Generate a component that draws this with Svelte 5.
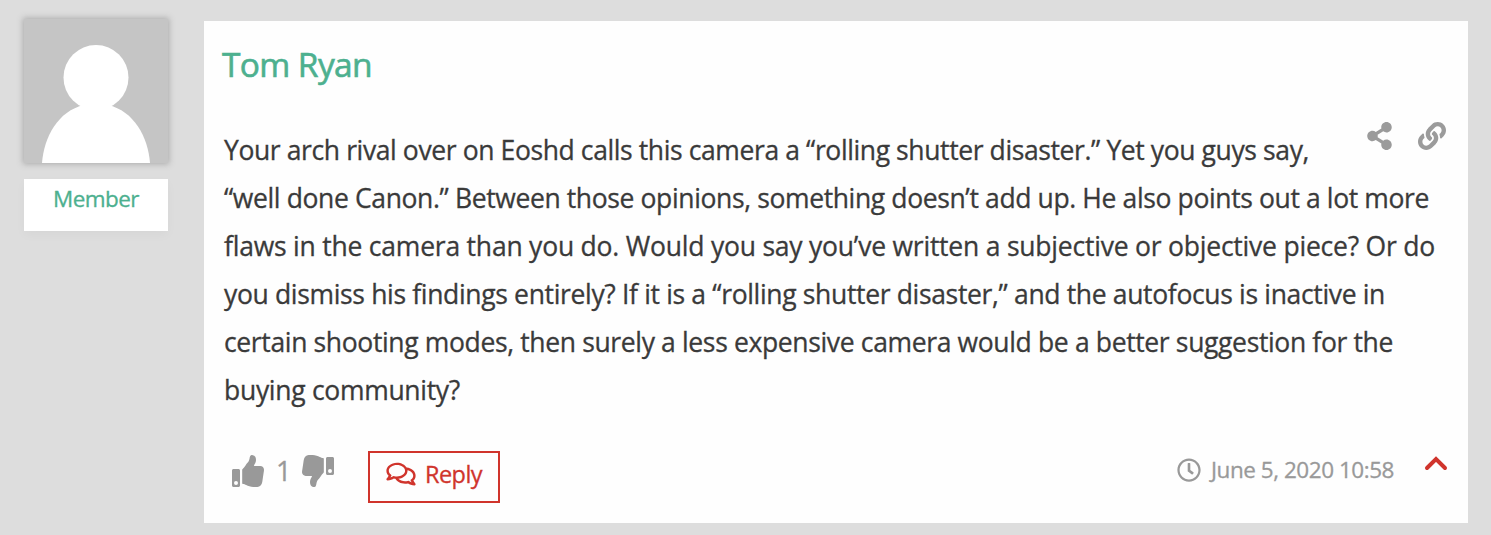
<script>
	const comment = {
		author: 'Tom Ryan',
		role: 'Member',
		votes: 1,
		date: 'June 5, 2020 10:58',
		lines: [
			{ text: 'Your arch rival over on Eoshd calls this camera a “rolling shutter disaster.” Yet you guys say,', width: 1085 },
			{ text: '“well done Canon.” Between those opinions, something doesn’t add up. He also points out a lot more', width: 1205 },
			{ text: 'flaws in the camera than you do. Would you say you’ve written a subjective or objective piece? Or do', width: 1211 },
			{ text: 'you dismiss his findings entirely? If it is a “rolling shutter disaster,” and the autofocus is inactive in', width: 1161 },
			{ text: 'certain shooting modes, then surely a less expensive camera would be a better suggestion for the', width: 1169 },
			{ text: 'buying community?', width: 236 }
		]
	};

	// stretch or squeeze the tracking so a line ends at its measure
	function fit(node, width) {
		const natural = node.getBoundingClientRect().width;
		node.style.letterSpacing = `${(width - natural) / node.textContent.length}px`;
	}
</script>

{#snippet thumb()}
	<path d="M384 81.5c0 42.4-26 66.2-33.3 94.5h101.8c33.4 0 59.4 27.7 59.5 58.1 0 18-3 31-6 49l-22 150c-8 48-38 78-80 79h-57c-48.3 0-87.8-17.6-119.6-31.7-16-7.1-36.8-15.9-52.6-16.2-6.5-.1-11.8-5.5-11.8-12V238.3c0-3.2 1.3-6.3 3.6-8.5 39.6-39.1 56.6-80.6 89.1-113.1 14.8-14.8 20.2-37.2 25.4-58.9C282.5 39.3 291.8 0 312 0c24 0 72 8 72 81.5z" />
{/snippet}

<div class="comment">
	<aside>
		<svg class="avatar" viewBox="0 0 144 144">
			<path fill="#c5c5c5" d="M0 0h144v144H0z" />
			<circle cx="72" cy="58.5" r="32.5" fill="#fff" />
			<path fill="#fff" d="M18 144C20 118 34 92 60 86h24c26 6 40 32 42 58z" />
		</svg>
		<div class="role"><span use:fit={86}>{comment.role}</span></div>
	</aside>

	<article>
		<h3><span use:fit={150}>{comment.author}</span></h3>

		<div class="body">
			<div class="tools">
				<svg width="25" height="28" viewBox="0 0 448 512">
					<path d="M352 320c-22.608 0-43.387 7.819-59.79 20.895l-102.486-64.054a96.551 96.551 0 0 0 0-41.683l102.486-64.054C308.613 184.181 329.392 192 352 192c53.019 0 96-42.981 96-96S405.019 0 352 0s-96 42.981-96 96c0 7.158.79 14.13 2.276 20.841L155.79 180.895C139.387 167.819 118.608 160 96 160c-53.019 0-96 42.981-96 96s42.981 96 96 96c22.608 0 43.387-7.819 59.79-20.895l102.486 64.054A96.301 96.301 0 0 0 256 416c0 53.019 42.981 96 96 96s96-42.981 96-96-42.981-96-96-96z" />
				</svg>
				<svg width="28" height="28" viewBox="0 0 512 512">
					<path d="M326.612 185.391c59.747 59.809 58.927 155.698.36 214.59-.11.12-.24.25-.36.37l-67.2 67.2c-59.27 59.27-155.699 59.262-214.96 0-59.27-59.26-59.27-155.7 0-214.96l37.106-37.106c9.84-9.84 26.786-3.3 27.294 10.606.648 17.722 3.826 35.527 9.69 52.721 1.986 5.822.567 12.262-3.783 16.612l-13.087 13.087c-28.026 28.026-28.905 73.66-1.155 101.96 28.024 28.579 74.086 28.749 102.325.51l67.2-67.19c28.191-28.191 28.073-73.757 0-101.83-3.701-3.694-7.429-6.564-10.341-8.569a16.037 16.037 0 0 1-6.947-12.606c-.396-10.567 3.348-21.456 11.698-29.806l21.054-21.055c5.521-5.521 14.182-6.199 20.584-1.731a152.482 152.482 0 0 1 20.522 17.197zM467.547 44.449c-59.261-59.262-155.69-59.27-214.96 0l-67.2 67.2c-.12.12-.25.25-.36.37-58.566 58.892-59.387 154.781.36 214.59a152.454 152.454 0 0 0 20.521 17.196c6.402 4.468 15.064 3.789 20.584-1.731l21.054-21.055c8.35-8.35 12.094-19.239 11.698-29.806a16.037 16.037 0 0 0-6.947-12.606c-2.912-2.005-6.64-4.875-10.341-8.569-28.073-28.073-28.191-73.639 0-101.83l67.2-67.19c28.239-28.239 74.3-28.069 102.325.51 27.75 28.3 26.872 73.934-1.155 101.96l-13.087 13.087c-4.35 4.35-5.769 10.79-3.783 16.612 5.864 17.194 9.042 34.999 9.69 52.721.509 13.906 17.454 20.446 27.294 10.606l37.106-37.106c59.271-59.259 59.271-155.699.001-214.959z" />
				</svg>
			</div>
			<p>
				{#each comment.lines as line}
					<span use:fit={line.width}>{line.text}</span><br />
				{/each}
			</p>
		</div>

		<footer>
			<div class="votes">
				<svg width="32" height="32" viewBox="0 0 512 512">
					<path fill-rule="evenodd" d="M104 224H24c-13.3 0-24 10.7-24 24v240c0 13.3 10.7 24 24 24h80c13.3 0 24-10.7 24-24V248c0-13.3-10.7-24-24-24zM64 480a32 32 0 1 1 0-64 32 32 0 0 1 0 64z" />
					{@render thumb()}
				</svg>
				<span class="count">{comment.votes}</span>
				<svg width="32" height="32" viewBox="0 0 512 512">
					<path fill-rule="evenodd" d="M408 32h80c13.3 0 24 10.7 24 24v240c0 13.3-10.7 24-24 24h-80c-13.3 0-24-10.7-24-24V56c0-13.3 10.7-24 24-24zm40 256a32 32 0 1 0 0-64 32 32 0 0 0 0 64z" />
					<g transform="rotate(180 256 256)">{@render thumb()}</g>
				</svg>
			</div>

			<button class="reply">
				<svg width="30" height="26" viewBox="0 0 576 512">
					<path d="M532 386.2c27.5-27.1 44-61.1 44-98.2 0-80-76.5-146.1-176.2-157.9C368.3 72.5 294.3 32 208 32 93.1 32 0 103.6 0 192c0 37 16.5 71 44 98.2-15.3 30.7-37.3 54.5-37.7 54.9-6.3 6.7-8.1 16.5-4.4 25 3.6 8.5 12 14 21.2 14 53.5 0 96.7-20.2 125.2-38.8 9.2 2.1 18.7 3.7 28.4 4.9C208.1 407.6 281.8 448 368 448c20.8 0 40.8-2.4 59.8-6.8C456.3 459.7 499.4 480 553 480c9.2 0 17.5-5.5 21.2-14 3.6-8.5 1.9-18.3-4.4-25-.4-.3-22.5-24.1-37.8-54.8zm-392.8-92.3L122.1 305c-14.1 9.1-28.5 16.3-43.1 21.4 2.7-4.7 5.4-9.7 8-14.8l15.5-31.1L77.7 256C64.2 242.6 48 220.7 48 192c0-60.7 73.3-112 160-112s160 51.3 160 112-73.3 112-160 112c-16.5 0-33-1.9-49-5.6l-19.8-4.5zM498.3 352l-24.7 24.4 15.5 31.1c2.6 5.1 5.3 10.1 8 14.8-14.6-5.1-29-12.3-43.1-21.4l-17.1-11.1-19.9 4.6c-16 3.7-32.5 5.6-49 5.6-54 0-102.2-20.1-131.3-49.7C338 339.5 416 272.9 416 192c0-3.4-.4-6.7-.7-10C479.7 196.5 528 238.8 528 288c0 28.7-16.2 50.6-29.7 64z" />
				</svg>
				<span use:fit={57}>Reply</span>
			</button>

			<div class="date">
				<svg width="24" height="24" viewBox="0 0 512 512">
					<path d="M256 8C119 8 8 119 8 256s111 248 248 248 248-111 248-248S393 8 256 8zm0 448c-110.5 0-200-89.5-200-200S145.5 56 256 56s200 89.5 200 200-89.5 200-200 200zm61.8-104.4l-84.9-61.7c-3.1-2.3-4.9-5.9-4.9-9.7V116c0-6.6 5.4-12 12-12h32c6.6 0 12 5.4 12 12v141.7l66.8 48.6c5.4 3.9 6.5 11.4 2.6 16.8L334.6 349c-3.9 5.3-11.4 6.5-16.8 2.6z" />
				</svg>
				<span use:fit={183}>{comment.date}</span>
			</div>

			<svg class="toggle" width="24" height="16" viewBox="0 0 24 16">
				<path d="M3 12l9-9 9 9" />
			</svg>
		</footer>
	</article>
</div>

<style>
	:global(body) {
		background: #ddd;
	}

	.comment {
		display: flex;
		align-items: flex-start;
		gap: 36px;
		height: 535px;
		padding: 19px 23px 0 24px;
		box-sizing: border-box;
		font-family: 'Open Sans', 'Noto Sans', sans-serif;
		font-stretch: 88%;
		color: #3a3a3a;
	}

	.comment span {
		white-space: nowrap;
		-webkit-text-stroke: 0.3px currentColor;
	}

	aside {
		width: 144px;
		flex-shrink: 0;
	}

	.avatar {
		display: block;
		width: 144px;
		height: 144px;
		box-shadow: 0 0 6px 1px #aaa;
	}

	.role {
		height: 52px;
		margin-top: 16px;
		background: #fff;
		box-shadow: 0 4px 10px rgba(0, 0, 0, 0.03);
		color: #4db08f;
		font-size: 22.5px;
		line-height: 40px;
		text-align: center;
	}

	article {
		width: 1264px;
		height: 502px;
		margin-top: 2px;
		padding: 18px 20px 0;
		box-sizing: border-box;
		background: #fefefe;
	}

	h3 {
		margin: 0 0 0 -2px;
		color: #4db08f;
		font-size: 33.5px;
		font-weight: 400;
		line-height: 50px;
	}

	.comment h3 span {
		-webkit-text-stroke-width: 0.6px;
	}

	.body {
		margin-top: 37px;
	}

	.tools {
		float: right;
		display: flex;
		gap: 26px;
		margin: -4px 2px 0 0;
		fill: #9b9b9b;
	}

	p {
		margin: 0;
		font-size: 26.5px;
		line-height: 48px;
	}

	footer {
		display: flex;
		align-items: flex-start;
		margin-top: 37px;
		color: #999;
	}

	.votes {
		display: flex;
		align-items: center;
		gap: 12px;
		margin: 4px 0 0 8px;
		fill: #999;
		font-size: 27px;
		line-height: 32px;
	}

	.count {
		width: 14px;
	}

	.reply {
		display: flex;
		align-items: center;
		gap: 9px;
		width: 132px;
		height: 52px;
		margin-left: 34px;
		padding: 0 0 7px 16px;
		box-sizing: border-box;
		border: 2px solid #d0342c;
		background: none;
		color: #d0342c;
		fill: #d0342c;
		font: inherit;
		font-size: 23.5px;
	}

	.date {
		display: flex;
		align-items: center;
		gap: 10px;
		margin: 4px 0 0 auto;
		fill: #999;
		font-size: 22.5px;
		line-height: 30px;
	}

	.toggle {
		margin: 5px 0 0 30px;
		fill: none;
		stroke: #d0342c;
		stroke-width: 4;
		stroke-linecap: round;
	}
</style>
